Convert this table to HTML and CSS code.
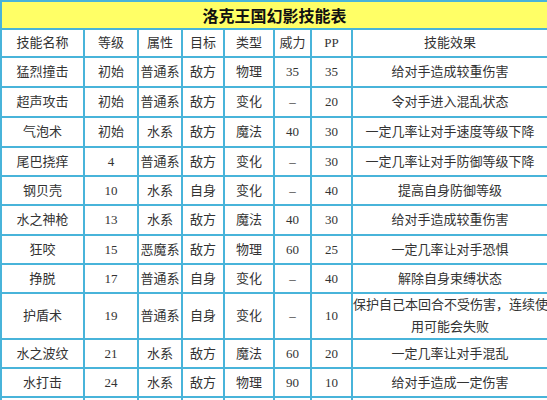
FILE: index.html
```html
<!DOCTYPE html>
<html lang="zh-CN">
<head>
<meta charset="utf-8">
<title>洛克王国幻影技能表</title>
<link rel="stylesheet" href="styles.css">
</head>
<body>
<table class="skills">
  <colgroup>
    <col class="c-name"><col class="c-lv"><col class="c-attr"><col class="c-tgt"><col class="c-type"><col class="c-pow"><col class="c-pp"><col class="c-eff">
  </colgroup>
  <tr class="title-row"><th colspan="8" class="title">洛克王国幻影技能表</th></tr>
  <tr class="head-row"><td>技能名称</td><td>等级</td><td>属性</td><td>目标</td><td>类型</td><td>威力</td><td>PP</td><td>技能效果</td></tr>
  <tr class="r30"><td>猛烈撞击</td><td>初始</td><td>普通系</td><td>敌方</td><td>物理</td><td>35</td><td>35</td><td>给对手造成较重伤害</td></tr>
  <tr class="r30"><td>超声攻击</td><td>初始</td><td>普通系</td><td>敌方</td><td>变化</td><td>–</td><td>20</td><td>令对手进入混乱状态</td></tr>
  <tr class="r30"><td>气泡术</td><td>初始</td><td>水系</td><td>敌方</td><td>魔法</td><td>40</td><td>30</td><td>一定几率让对手速度等级下降</td></tr>
  <tr class="r29"><td>尾巴挠痒</td><td>4</td><td>普通系</td><td>敌方</td><td>变化</td><td>–</td><td>30</td><td>一定几率让对手防御等级下降</td></tr>
  <tr class="r29"><td>钢贝壳</td><td>10</td><td>水系</td><td>自身</td><td>变化</td><td>–</td><td>40</td><td>提高自身防御等级</td></tr>
  <tr class="r30"><td>水之神枪</td><td>13</td><td>水系</td><td>敌方</td><td>魔法</td><td>40</td><td>30</td><td>给对手造成较重伤害</td></tr>
  <tr class="r29"><td>狂咬</td><td>15</td><td>恶魔系</td><td>敌方</td><td>物理</td><td>60</td><td>25</td><td>一定几率让对手恐惧</td></tr>
  <tr class="r29"><td>挣脱</td><td>17</td><td>普通系</td><td>自身</td><td>变化</td><td>–</td><td>40</td><td>解除自身束缚状态</td></tr>
  <tr class="r46"><td>护盾术</td><td>19</td><td>普通系</td><td>自身</td><td>变化</td><td>–</td><td>10</td><td class="wrap">保护自己本回合不受伤害，连续使<br>用可能会失败</td></tr>
  <tr class="r29"><td>水之波纹</td><td>21</td><td>水系</td><td>敌方</td><td>魔法</td><td>60</td><td>20</td><td>一定几率让对手混乱</td></tr>
  <tr class="r29"><td>水打击</td><td>24</td><td>水系</td><td>敌方</td><td>物理</td><td>90</td><td>10</td><td>给对手造成一定伤害</td></tr>
  <tr class="r29"><td></td><td></td><td></td><td></td><td></td><td></td><td></td><td></td></tr>
</table>
</body>
</html>
```
FILE: styles.css
```css
html, body {
  margin: 0;
  padding: 0;
  background: #ffffff;
}
.skills {
  width: 547px;
  border-collapse: collapse;
  table-layout: fixed;
  font-family: "Liberation Serif", "Noto Sans CJK SC", serif;
  font-size: 13px;
  color: #333333;
}
.c-name { width: 83px; }
.c-lv { width: 54px; }
.c-attr { width: 44px; }
.c-tgt { width: 42px; }
.c-type { width: 50px; }
.c-pow { width: 37px; }
.c-pp { width: 41px; }
.c-eff { width: 196px; }
.skills td, .skills th {
  border: 2px solid #48b4da;
  padding: 0;
  text-align: center;
  vertical-align: middle;
  line-height: 18px;
  white-space: nowrap;
}
.title-row { height: 28px; }
.title {
  background: #ffff66;
  color: #111111;
  font-family: "Noto Sans CJK SC", sans-serif;
  font-size: 16px;
  font-weight: bold;
}
.head-row { height: 28px; }
.r30 { height: 30px; }
.r29 { height: 29px; }
.r46 { height: 46px; }
.skills td.wrap { line-height: 22px; }
```
